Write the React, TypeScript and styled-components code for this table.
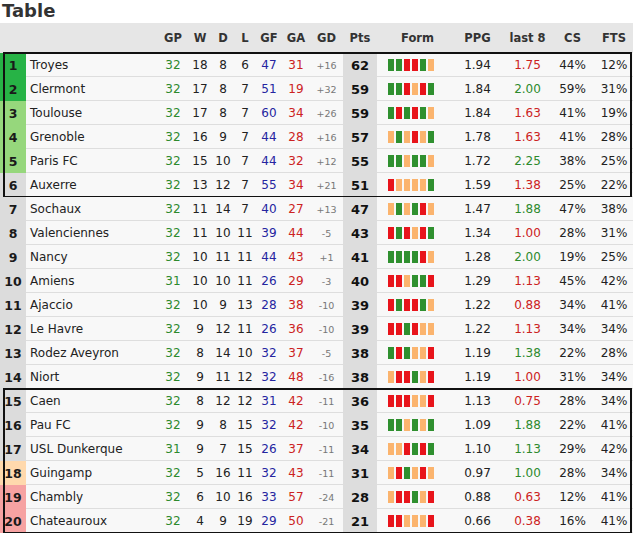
import React from "react";
import styled, { createGlobalStyle } from "styled-components";

type Res = "W" | "D" | "L";

interface Team {
  pos: number;
  name: string;
  gp: number;
  w: number;
  d: number;
  l: number;
  gf: number;
  ga: number;
  pts: number;
  form: string;
  ppg: string;
  last8: string;
  cs: string;
  fts: string;
}

const teams: Team[] = [
  { pos: 1, name: "Troyes", gp: 32, w: 18, d: 8, l: 6, gf: 47, ga: 31, pts: 62, form: "WWLLWD", ppg: "1.94", last8: "1.75", cs: "44%", fts: "12%" },
  { pos: 2, name: "Clermont", gp: 32, w: 17, d: 8, l: 7, gf: 51, ga: 19, pts: 59, form: "WWLDLW", ppg: "1.84", last8: "2.00", cs: "59%", fts: "31%" },
  { pos: 3, name: "Toulouse", gp: 32, w: 17, d: 8, l: 7, gf: 60, ga: 34, pts: 59, form: "WLWLWD", ppg: "1.84", last8: "1.63", cs: "41%", fts: "19%" },
  { pos: 4, name: "Grenoble", gp: 32, w: 16, d: 9, l: 7, gf: 44, ga: 28, pts: 57, form: "DWDLDW", ppg: "1.78", last8: "1.63", cs: "41%", fts: "28%" },
  { pos: 5, name: "Paris FC", gp: 32, w: 15, d: 10, l: 7, gf: 44, ga: 32, pts: 55, form: "WWDWWD", ppg: "1.72", last8: "2.25", cs: "38%", fts: "25%" },
  { pos: 6, name: "Auxerre", gp: 32, w: 13, d: 12, l: 7, gf: 55, ga: 34, pts: 51, form: "LDDDDW", ppg: "1.59", last8: "1.38", cs: "25%", fts: "22%" },
  { pos: 7, name: "Sochaux", gp: 32, w: 11, d: 14, l: 7, gf: 40, ga: 27, pts: 47, form: "DWDWLD", ppg: "1.47", last8: "1.88", cs: "47%", fts: "38%" },
  { pos: 8, name: "Valenciennes", gp: 32, w: 11, d: 10, l: 11, gf: 39, ga: 44, pts: 43, form: "LWLDLW", ppg: "1.34", last8: "1.00", cs: "28%", fts: "31%" },
  { pos: 9, name: "Nancy", gp: 32, w: 10, d: 11, l: 11, gf: 44, ga: 43, pts: 41, form: "WWWWLD", ppg: "1.28", last8: "2.00", cs: "19%", fts: "25%" },
  { pos: 10, name: "Amiens", gp: 31, w: 10, d: 10, l: 11, gf: 26, ga: 29, pts: 40, form: "LLDWWL", ppg: "1.29", last8: "1.13", cs: "45%", fts: "42%" },
  { pos: 11, name: "Ajaccio", gp: 32, w: 10, d: 9, l: 13, gf: 28, ga: 38, pts: 39, form: "LWLLWD", ppg: "1.22", last8: "0.88", cs: "34%", fts: "41%" },
  { pos: 12, name: "Le Havre", gp: 32, w: 9, d: 12, l: 11, gf: 26, ga: 36, pts: 39, form: "LLWLDD", ppg: "1.22", last8: "1.13", cs: "34%", fts: "34%" },
  { pos: 13, name: "Rodez Aveyron", gp: 32, w: 8, d: 14, l: 10, gf: 32, ga: 37, pts: 38, form: "WLWDDL", ppg: "1.19", last8: "1.38", cs: "22%", fts: "28%" },
  { pos: 14, name: "Niort", gp: 32, w: 9, d: 11, l: 12, gf: 32, ga: 48, pts: 38, form: "DLLWDL", ppg: "1.19", last8: "1.00", cs: "31%", fts: "34%" },
  { pos: 15, name: "Caen", gp: 32, w: 8, d: 12, l: 12, gf: 31, ga: 42, pts: 36, form: "LLLDDL", ppg: "1.13", last8: "0.75", cs: "28%", fts: "34%" },
  { pos: 16, name: "Pau FC", gp: 32, w: 9, d: 8, l: 15, gf: 32, ga: 42, pts: 35, form: "WWDWDW", ppg: "1.09", last8: "1.88", cs: "22%", fts: "41%" },
  { pos: 17, name: "USL Dunkerque", gp: 31, w: 9, d: 7, l: 15, gf: 26, ga: 37, pts: 34, form: "DDLWLW", ppg: "1.10", last8: "1.13", cs: "29%", fts: "42%" },
  { pos: 18, name: "Guingamp", gp: 32, w: 5, d: 16, l: 11, gf: 32, ga: 43, pts: 31, form: "DLWDLD", ppg: "0.97", last8: "1.00", cs: "28%", fts: "34%" },
  { pos: 19, name: "Chambly", gp: 32, w: 6, d: 10, l: 16, gf: 33, ga: 57, pts: 28, form: "DLLWDL", ppg: "0.88", last8: "0.63", cs: "12%", fts: "41%" },
  { pos: 20, name: "Chateauroux", gp: 32, w: 4, d: 9, l: 19, gf: 29, ga: 50, pts: 21, form: "LLDDDL", ppg: "0.66", last8: "0.38", cs: "16%", fts: "41%" },
];

const rankColor = (pos: number) => {
  if (pos <= 2) return "#27b346";
  if (pos <= 5) return "#96d77c";
  if (pos === 18) return "#ffd9ad";
  if (pos >= 19) return "#f6a2a2";
  return "#dcdcdc";
};

const COLS = "26px 132px 30px 24px 22px 22px 26px 28px 33px 34px 73px 55px 45px 45px 38px";

const GlobalStyle = createGlobalStyle`
  body {
    margin: 0;
    background: #ffffff;
    font-family: "DejaVu Sans", Verdana, sans-serif;
  }
`;

const Page = styled.div`
  width: 633px;
  color: #222;
`;

const Title = styled.div`
  height: 23px;
  padding-left: 2px;
  font-size: 18px;
  font-weight: bold;
  color: #333;
  line-height: 21px;
`;

const HeaderRow = styled.div`
  display: grid;
  grid-template-columns: ${COLS};
  height: 30px;
  align-items: center;
  background: #e6e6e6;
  font-size: 11.5px;
  font-weight: bold;
  color: #333;
  text-align: center;
`;

const Group = styled.div<{ $boxed?: boolean }>`
  position: relative;
  &::after {
    content: "";
    display: ${(p) => (p.$boxed ? "block" : "none")};
    position: absolute;
    top: -1px;
    left: 3px;
    right: 1px;
    bottom: -1px;
    border: 2px solid #111;
    pointer-events: none;
  }
`;

const Row = styled.div`
  display: grid;
  grid-template-columns: ${COLS};
  height: 24px;
  align-items: stretch;
  background: #f8f8f8;
  font-size: 12px;
  text-align: center;
  box-shadow: inset 0 -1px 0 #dedede;
`;

const Cell = styled.div<{ $color?: string }>`
  display: flex;
  align-items: center;
  justify-content: center;
  color: ${(p) => p.$color || "#222"};
`;

const Rank = styled(Cell)<{ $bg: string }>`
  background: ${(p) => p.$bg};
  font-weight: bold;
  font-size: 12.5px;
  color: #1a1a1a;
`;

const Name = styled(Cell)`
  justify-content: flex-start;
  padding-left: 4px;
  font-size: 12px;
`;

const Diff = styled(Cell)`
  font-size: 9.5px;
  color: #777;
`;

const Pts = styled(Cell)`
  background: #dddddd;
  font-weight: bold;
  font-size: 13px;
  color: #111;
`;

const Form = styled.div`
  display: flex;
  align-items: center;
  gap: 2px;
  padding-left: 11px;
`;

const Bar = styled.span<{ $r: Res }>`
  display: block;
  width: 6px;
  height: 12px;
  background: ${(p) => (p.$r === "W" ? "#2f902f" : p.$r === "L" ? "#e8141b" : "#fbb46e")};
`;

const HeadForm = styled.div`
  padding-left: 8px;
`;

const green = "#2d8a2d";
const red = "#cc2222";

const TeamRow = ({ t }: { t: Team }) => {
  const gd = t.gf - t.ga;
  const up = parseFloat(t.last8) > parseFloat(t.ppg);
  return (
    <Row>
      <Rank $bg={rankColor(t.pos)}>{t.pos}</Rank>
      <Name>{t.name}</Name>
      <Cell $color={green}>{t.gp}</Cell>
      <Cell>{t.w}</Cell>
      <Cell>{t.d}</Cell>
      <Cell>{t.l}</Cell>
      <Cell $color="#2525a0">{t.gf}</Cell>
      <Cell $color={red}>{t.ga}</Cell>
      <Diff>{gd > 0 ? `+${gd}` : gd}</Diff>
      <Pts>{t.pts}</Pts>
      <Form>
        {t.form.split("").map((r, i) => (
          <Bar key={i} $r={r as Res} />
        ))}
      </Form>
      <Cell>{t.ppg}</Cell>
      <Cell $color={up ? green : red}>{t.last8}</Cell>
      <Cell>{t.cs}</Cell>
      <Cell>{t.fts}</Cell>
    </Row>
  );
};

const App = () => {
  return (
    <Page>
      <GlobalStyle />
      <Title>Table</Title>
      <HeaderRow>
        <div />
        <div />
        <div>GP</div>
        <div>W</div>
        <div>D</div>
        <div>L</div>
        <div>GF</div>
        <div>GA</div>
        <div>GD</div>
        <div>Pts</div>
        <HeadForm>Form</HeadForm>
        <div>PPG</div>
        <div>last 8</div>
        <div>CS</div>
        <div>FTS</div>
      </HeaderRow>
      <Group $boxed>
        {teams.slice(0, 6).map((t) => (
          <TeamRow key={t.pos} t={t} />
        ))}
      </Group>
      <Group>
        {teams.slice(6, 14).map((t) => (
          <TeamRow key={t.pos} t={t} />
        ))}
      </Group>
      <Group $boxed>
        {teams.slice(14).map((t) => (
          <TeamRow key={t.pos} t={t} />
        ))}
      </Group>
    </Page>
  );
};

export default App;
